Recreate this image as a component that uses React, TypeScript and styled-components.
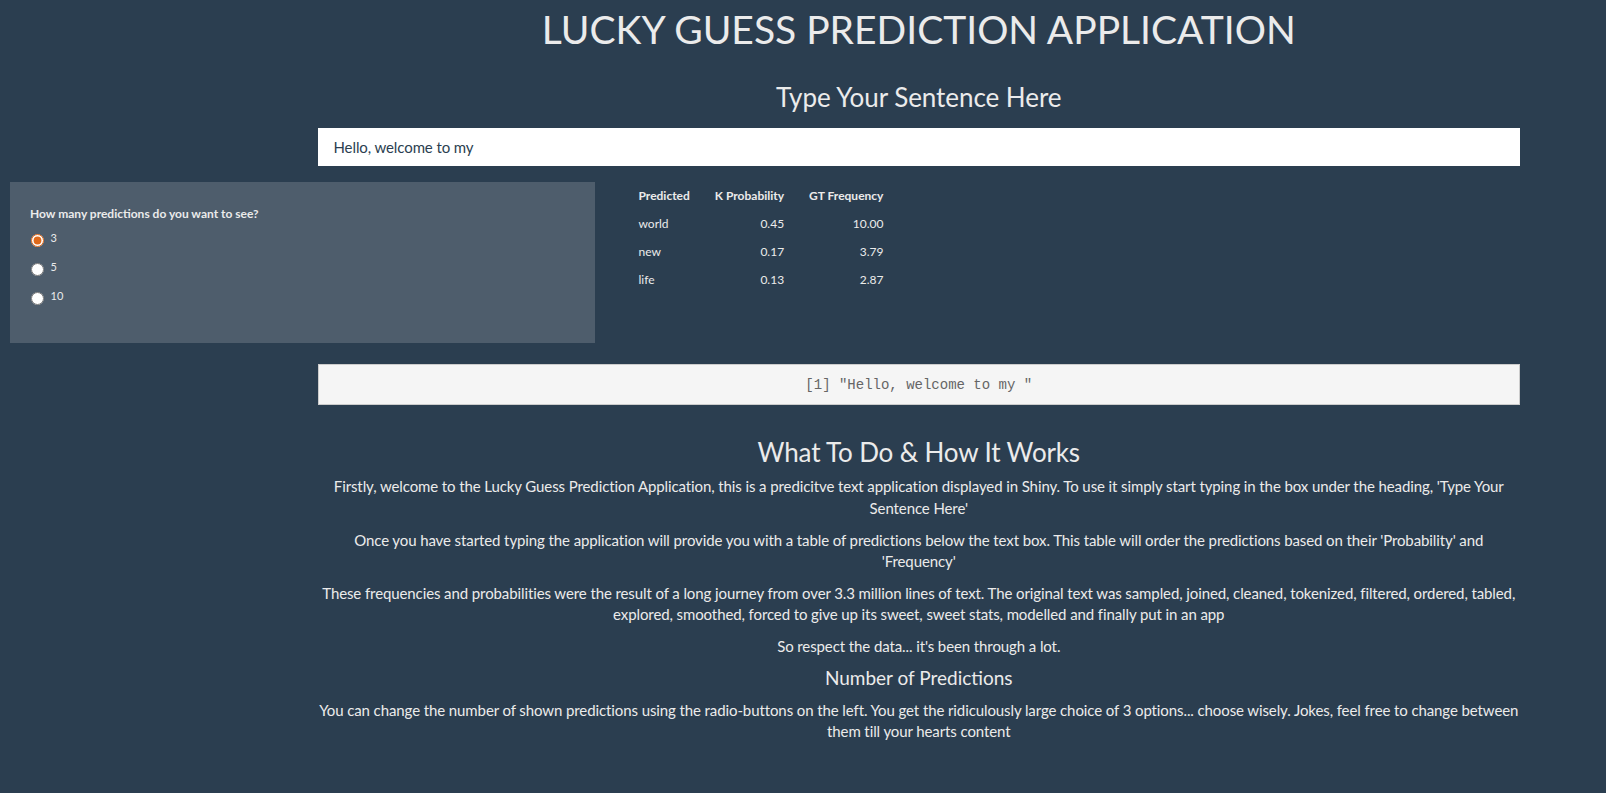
import React from "react";
import styled, { createGlobalStyle } from "styled-components";

const GlobalStyle = createGlobalStyle`
  html, body {
    margin: 0;
    padding: 0;
    background: #2b3e50;
  }
  body {
    font-family: Lato, "Noto Sans", "Liberation Sans", sans-serif;
    font-size: 15px;
    line-height: 1.42857;
    color: #ebebeb;
    min-height: 793px;
  }
  * { box-sizing: border-box; }
`;

const Page = styled.div`
  min-height: 793px;
  padding-bottom: 40px;
`;

const CenterColumn = styled.div<{ $top?: number }>`
  margin-left: 317.5px;
  width: 1202.5px;
  margin-top: ${(p) => p.$top ?? 0}px;
  text-align: center;
`;

const Heading = styled.div<{
  $size: number;
  $lh: number;
  $mt: number;
  $mb: number;
  $ls?: number;
}>`
  font-size: ${(p) => p.$size}px;
  line-height: ${(p) => p.$lh}px;
  font-weight: 400;
  letter-spacing: ${(p) => p.$ls ?? 0}px;
  margin: ${(p) => p.$mt}px 0 ${(p) => p.$mb}px;
  color: #ebebeb;
`;

const SentenceInput = styled.input`
  display: block;
  width: 100%;
  height: 38.5px;
  margin: 16px 0 0;
  padding: 0 16px;
  border: none;
  border-radius: 0;
  background: #ffffff;
  font-family: Lato, "Noto Sans", sans-serif;
  font-size: 15px;
  letter-spacing: -0.1px;
  color: #2b3e50;
  text-align: left;
  outline: none;
`;

const Row = styled.div`
  display: flex;
  align-items: flex-start;
  margin-top: 15.5px;
`;

const Well = styled.div`
  margin-left: 10px;
  width: 585px;
  height: 161px;
  padding: 23px 20px 20px;
  background: #4e5d6c;
`;

const FieldLabel = styled.div`
  font-size: 12px;
  line-height: 17px;
  font-weight: 700;
  color: #ebebeb;
`;

const RadioList = styled.div`
  display: flex;
  flex-direction: column;
  margin-top: 4px;
`;

const RadioRow = styled.label`
  display: flex;
  align-items: center;
  height: 29px;
  gap: 7px;
  font-size: 11px;
  color: #ebebeb;
  cursor: pointer;
`;

const RadioInput = styled.input`
  width: 13px;
  height: 13px;
  margin: 0 0 0 0.5px;
  accent-color: #df691a;
`;

const RadioText = styled.span`
  position: relative;
  top: -2px;
`;

const PredTable = styled.table`
  margin-left: 31px;
  border-collapse: collapse;
  font-size: 12px;
  color: #ebebeb;
`;

const HeadCell = styled.th<{ $align: "left" | "right" }>`
  height: 28px;
  padding: 0 12.5px;
  font-weight: 700;
  text-align: ${(p) => p.$align};
  white-space: nowrap;
`;

const Cell = styled.td<{ $align: "left" | "right" }>`
  height: 28px;
  padding: 0 12.5px;
  text-align: ${(p) => p.$align};
`;

const Verbatim = styled.pre`
  margin: 0;
  padding: 9.5px;
  border: 1px solid #cccccc;
  border-radius: 0;
  background: #f5f5f5;
  font-family: "Liberation Mono", "Courier New", monospace;
  font-size: 14px;
  line-height: 20px;
  color: #666666;
  text-align: center;
  white-space: pre;
`;

const Para = styled.p`
  margin: 0 0 10.5px;
  font-size: 15px;
  line-height: 1.42857;
  letter-spacing: -0.1px;
`;

const predictions = [
  { word: "world", k: "0.45", gt: "10.00" },
  { word: "new", k: "0.17", gt: "3.79" },
  { word: "life", k: "0.13", gt: "2.87" },
];

const choices = ["3", "5", "10"];

export default function App() {
  const [sentence, setSentence] = React.useState("Hello, welcome to my");
  const [count, setCount] = React.useState("3");

  return (
    <Page>
      <GlobalStyle />
      <CenterColumn>
        <Heading as="h1" $size={39} $lh={43} $mt={8} $mb={0} $ls={0}>
          LUCKY GUESS PREDICTION APPLICATION
        </Heading>
        <Heading as="h3" $size={26} $lh={28.6} $mt={32} $mb={0} $ls={-0.05}>
          Type Your Sentence Here
        </Heading>
        <SentenceInput
          type="text"
          value={sentence}
          onChange={(e) => setSentence(e.target.value)}
        />
      </CenterColumn>

      <Row>
        <Well>
          <FieldLabel>How many predictions do you want to see?</FieldLabel>
          <RadioList>
            {choices.map((c) => (
              <RadioRow key={c}>
                <RadioInput
                  type="radio"
                  name="npred"
                  value={c}
                  checked={count === c}
                  onChange={() => setCount(c)}
                />
                <RadioText>{c}</RadioText>
              </RadioRow>
            ))}
          </RadioList>
        </Well>
        <PredTable>
          <thead>
            <tr>
              <HeadCell $align="left">Predicted</HeadCell>
              <HeadCell $align="right">K Probability</HeadCell>
              <HeadCell $align="right">GT Frequency</HeadCell>
            </tr>
          </thead>
          <tbody>
            {predictions.map((p) => (
              <tr key={p.word}>
                <Cell $align="left">{p.word}</Cell>
                <Cell $align="right">{p.k}</Cell>
                <Cell $align="right">{p.gt}</Cell>
              </tr>
            ))}
          </tbody>
        </PredTable>
      </Row>

      <CenterColumn $top={21.5}>
        <Verbatim>{`[1] "${sentence} "`}</Verbatim>
        <Heading as="h3" $size={26} $lh={28.6} $mt={32.5} $mb={10.2} $ls={-0.15}>
          What To Do &amp; How It Works
        </Heading>
        <Para>
          Firstly, welcome to the Lucky Guess Prediction Application, this is a predicitve text
          application displayed in Shiny. To use it simply start typing in the box under the
          heading, 'Type Your Sentence Here'
        </Para>
        <Para>
          Once you have started typing the application will provide you with a table of
          predictions below the text box. This table will order the predictions based on their
          'Probability' and 'Frequency'
        </Para>
        <Para>
          These frequencies and probabilities were the result of a long journey from over 3.3
          million lines of text. The original text was sampled, joined, cleaned, tokenized,
          filtered, ordered, tabled, explored, smoothed, forced to give up its sweet, sweet stats,
          modelled and finally put in an app
        </Para>
        <Para>So respect the data... it's been through a lot.</Para>
        <Heading as="h4" $size={19} $lh={20.9} $mt={0} $mb={10.5} $ls={0}>
          Number of Predictions
        </Heading>
        <Para>
          You can change the number of shown predictions using the radio-buttons on the left. You
          get the ridiculously large choice of 3 options... choose wisely. Jokes, feel free to
          change between them till your hearts content
        </Para>
      </CenterColumn>
    </Page>
  );
}
